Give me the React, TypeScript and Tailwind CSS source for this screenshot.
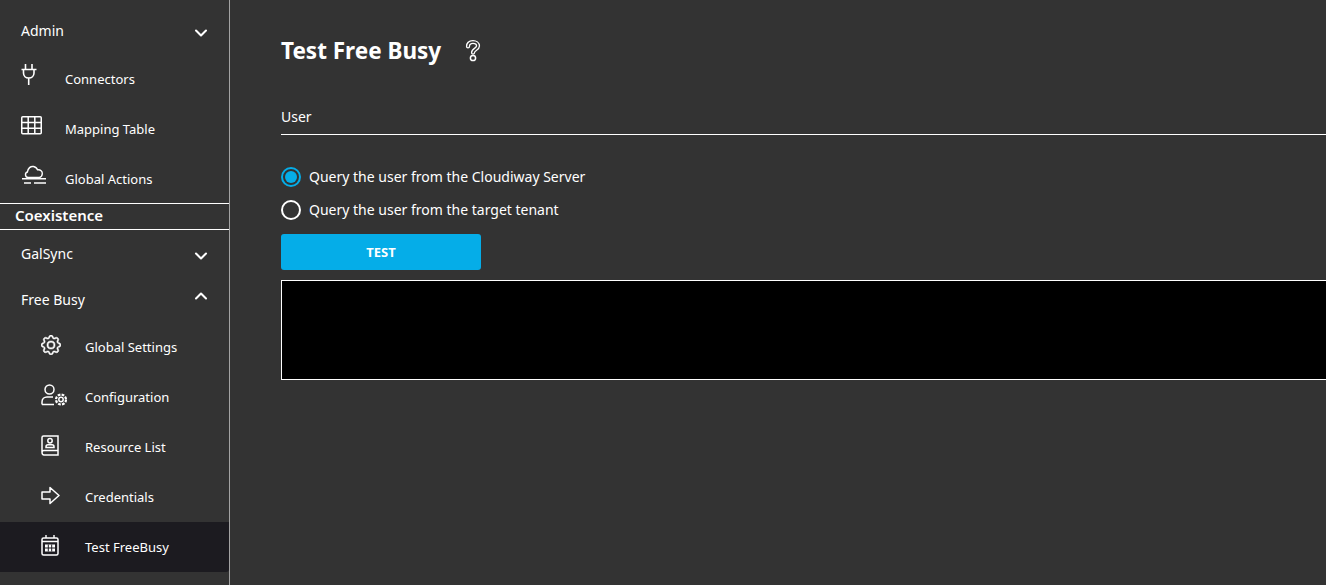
import { ChevronDown, ChevronUp } from 'lucide-react';
import { BsGear } from 'react-icons/bs';
import type { ReactNode } from 'react';

const font = "font-['Noto_Sans','Open_Sans',sans-serif]";

function Plug() {
  return (
    <svg width="16" height="22" viewBox="0 0 16 22" fill="none" stroke="currentColor" strokeWidth="1.600">
      <path d="M4.500 0v5M11 0v5" />
      <path d="M.5 5.500h15M2.500 5.500v3.500c0 3 2.200 5 5.200 5s5.300-2 5.300-5V5.500M7.700 14v7" />
    </svg>
  );
}

function GridTable() {
  return (
    <svg width="21" height="19" viewBox="0 0 21 19" fill="none" stroke="currentColor" strokeWidth="1.500">
      <rect x=".75" y=".75" width="19.500" height="17" rx="1" />
      <path d="M.75 6.500h19.500M.75 12.200h19.500M7.200.75v17M13.800.75v17" />
    </svg>
  );
}

function CloudFog() {
  return (
    <svg width="26" height="22" viewBox="0 0 26 22" fill="none" stroke="currentColor" strokeWidth="1.400">
      <path d="M7 13.500c-2.800-.2-3.600-4.500-.6-5.500C7 4.200 9.500 2 12.500 2.500c2 .3 3.300 1.500 4 3.300 3-.4 5 1.400 4.800 3.900-.1 1.800-1.200 3.300-2.800 3.800z" />
      <path d="M1 14.700h24M3 19h7M13 19h12" />
    </svg>
  );
}

function UserGear() {
  return (
    <svg width="27" height="22" viewBox="0 0 27 22" fill="none" stroke="currentColor" strokeWidth="1.500">
      <circle cx="8.500" cy="5.500" r="4.500" />
      <path d="M1 20.500v-2.500c0-3 2.200-5 5-5h6M1 20.500h12" />
      <circle cx="20" cy="15.500" r="2.200" />
      <circle cx="20" cy="15.500" r="5" strokeDasharray="2.700 1.230" strokeWidth="2.200" />
    </svg>
  );
}

function BookPerson() {
  return (
    <svg width="18" height="21" viewBox="0 0 18 21" fill="none" stroke="currentColor" strokeWidth="1.500">
      <path d="M1 17V2.500C1 1.500 1.600 1 2.500 1H17v14.500H3c-1.300 0-2 .7-2 1.800S1.700 20 3 20h14v-4.500" />
      <circle cx="9" cy="5.800" r="2.200" />
      <path d="M5 12.500v-.8c0-1.300 1-2 2-2h4c1 0 2 .7 2 2v.8z" />
    </svg>
  );
}

function ArrowOutline() {
  return (
    <svg width="19" height="19" viewBox="0 0 19 19" fill="none" stroke="currentColor" strokeWidth="1.500" strokeLinejoin="round">
      <path d="M1 6h8V1.500l9 8-9 8V13H1z" />
    </svg>
  );
}

function CalendarGrid() {
  return (
    <svg width="18" height="21" viewBox="0 0 18 21" fill="none">
      <rect x="1" y="3" width="16" height="17" rx="1.500" stroke="currentColor" strokeWidth="1.500" />
      <path d="M1 6.500h16M5 0v3M13 0v3" stroke="currentColor" strokeWidth="1.400" />
      <path d="M4 9.500h10v7H4z" fill="currentColor" />
      <path d="M4 13h10M7.300 9.500v7M10.700 9.500v7" stroke="#1c1b20" strokeWidth="1" />
    </svg>
  );
}

function QuestionOutline() {
  const d = 'M4 7.500C4 4.300 6.300 3 9 3s5 1.500 5 4.100c0 3.300-5 3.200-5 6.600';
  return (
    <svg width="18" height="24" viewBox="0 0 18 24" fill="none" strokeLinecap="round">
      <path d={d} stroke="#ffffff" strokeWidth="4.200" />
      <path d={d} stroke="#333333" strokeWidth="1.600" />
      <circle cx="9" cy="19" r="2.600" stroke="#ffffff" strokeWidth="1.500" />
    </svg>
  );
}

function Section({ label, open, className }: { label: string; open?: boolean; className: string }) {
  return (
    <div className={`flex items-center justify-between pl-[21px] pr-[18px] text-[14px] text-white ${className}`}>
      <span>{label}</span>
      {open ? (
        <ChevronUp size={20} strokeWidth={2.5} className="mb-[6px]" />
      ) : (
        <ChevronDown size={20} strokeWidth={2.5} className="mt-[6px]" />
      )}
    </div>
  );
}

function NavItem({ icon, label, nested, active }: { icon: ReactNode; label: string; nested?: boolean; active?: boolean }) {
  return (
    <div
      className={`flex h-[50px] items-center text-[13px] text-white ${nested ? 'pl-[41px]' : 'pl-[21px]'} ${
        active ? 'rounded-br-[3px] bg-[#1c1b20]' : ''
      }`}
    >
      <span className={`flex w-[44px] shrink-0 items-center ${nested ? 'mb-[4px]' : 'mb-[8px]'}`}>{icon}</span>
      <span className="mt-[1px]">{label}</span>
    </div>
  );
}

function Radio({ label, checked }: { label: string; checked?: boolean }) {
  return (
    <label className="flex h-[33px] items-center gap-[8px] text-[14px] text-white">
      <span
        className={`flex h-[20px] w-[20px] items-center justify-center rounded-full border-2 ${
          checked ? 'border-[#05ade8]' : 'border-white'
        }`}
      >
        {checked && <span className="h-[12px] w-[12px] rounded-full bg-[#05ade8]" />}
      </span>
      <span className="mb-[1px]">{label}</span>
    </label>
  );
}

export default function App() {
  return (
    <div className={`flex h-[585px] w-[1326px] overflow-hidden bg-[#333333] ${font}`}>
      <aside className="h-full w-[230px] shrink-0 border-r border-[#a3a3a3]">
        <Section label="Admin" className="h-[54px] pt-[6px]" />
        <NavItem icon={<Plug />} label="Connectors" />
        <NavItem icon={<GridTable />} label="Mapping Table" />
        <div className="h-[49px]">
          <NavItem icon={<CloudFog />} label="Global Actions" />
        </div>
        <div className="flex h-[27px] items-center border-y border-white pb-[2px] pl-[15px] text-[15px] font-semibold text-white">
          Coexistence
        </div>
        <Section label="GalSync" className="h-[48px] pb-[2px]" />
        <Section label="Free Busy" open className="h-[44px] pb-[2px]" />
        <NavItem nested icon={<BsGear size={20} strokeWidth={0.4} />} label="Global Settings" />
        <NavItem nested icon={<UserGear />} label="Configuration" />
        <NavItem nested icon={<BookPerson />} label="Resource List" />
        <NavItem nested icon={<ArrowOutline />} label="Credentials" />
        <NavItem nested active icon={<CalendarGrid />} label="Test FreeBusy" />
      </aside>

      <main className="min-w-0 flex-1 pl-[51px] pt-[34px]">
        <div className="flex h-[34px] items-center gap-[23px]">
          <h1 className="text-[22.5px] font-bold text-white">Test Free Busy</h1>
          <QuestionOutline />
        </div>
        <div className="mt-[38px] h-[29px] w-[1100px] border-b border-white text-[14px] leading-[22px] text-white">User</div>
        <div className="mt-[25px]">
          <Radio checked label="Query the user from the Cloudiway Server" />
          <Radio label="Query the user from the target tenant" />
        </div>
        <button className="mt-[8px] block h-[36px] w-[200px] rounded-[3px] bg-[#05ade8] pt-[1px] text-[13px] font-bold text-white">
          TEST
        </button>
        <div className="mt-[10px] h-[100px] w-[1100px] border border-white bg-black" />
      </main>
    </div>
  );
}
